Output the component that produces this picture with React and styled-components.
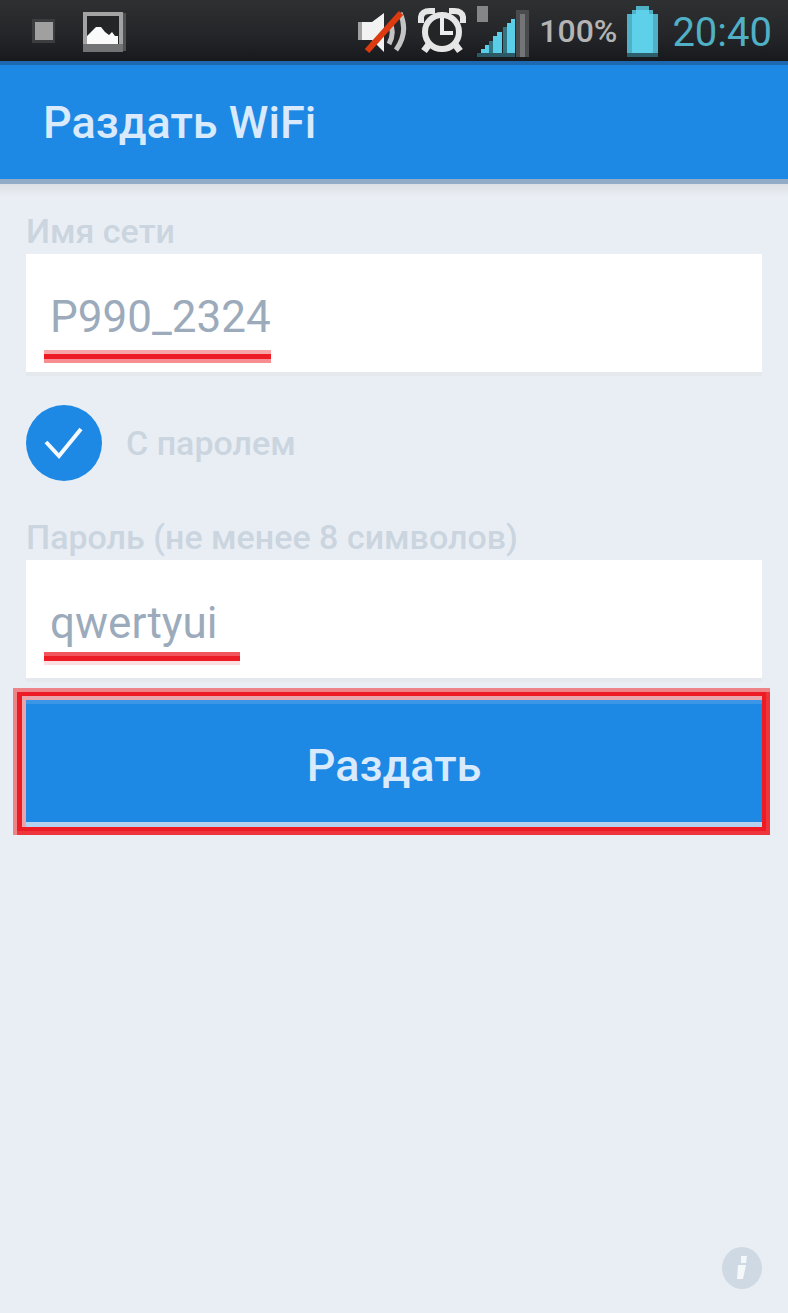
import { useState } from 'react';
import styled, { createGlobalStyle } from 'styled-components';

const GlobalStyle = createGlobalStyle`
  * {
    box-sizing: border-box;
  }

  body {
    margin: 0;
    background: #e9eef4;
    font-family: Roboto, 'Noto Sans', sans-serif;
  }
`;

const Screen = styled.div`
  min-height: 100vh;
  display: flex;
  flex-direction: column;
`;

const StatusBar = styled.div`
  height: 61px;
  padding: 0 16px 0 32px;
  display: flex;
  justify-content: space-between;
  align-items: center;
  background: linear-gradient(#2f3032, #242528 60%, #18191c);
`;

const StatusGroup = styled.div`
  display: flex;
  align-items: center;
  gap: ${({ $gap }) => $gap}px;
`;

const Battery = styled.span`
  font-size: 32px;
  font-weight: 500;
  color: #b4b4b4;
`;

const Clock = styled.span`
  margin-left: 4px;
  padding-top: 4px;
  font-size: 40px;
  color: #4fb0c6;
`;

const AppBar = styled.header`
  height: 123px;
  padding: 0 43px;
  display: flex;
  align-items: center;
  border-top: 4px solid #1d69b1;
  border-bottom: 5px solid #92abc6;
  background: #1e88e5;
`;

const Title = styled.h1`
  margin: 0;
  font-size: 45px;
  font-weight: 500;
  color: #d8eafb;
`;

const Form = styled.form`
  flex: 1;
  display: flex;
  flex-direction: column;
  padding: 24px 26px 22px;
  background: linear-gradient(#dde0e4, #e9eef4 12px);
`;

const Label = styled.label`
  font-size: 34px;
  line-height: 46px;
  font-weight: 500;
  color: #cbd5df;
`;

const Field = styled.div`
  position: relative;
`;

const TextInput = styled.input`
  display: block;
  width: 100%;
  height: 122px;
  padding: 8px 24px 0;
  border: none;
  border-bottom: 4px solid #e5e8ec;
  border-radius: 0;
  background: #fff;
  font-family: inherit;
  font-size: 44px;
  color: #9cabbb;

  &:focus {
    outline: none;
  }
`;

const Underline = styled.span`
  position: absolute;
  left: 18px;
  bottom: ${({ $bottom }) => $bottom}px;
  width: ${({ $width }) => $width}px;
  height: 13px;
  border-top: 4px solid ${({ $top }) => $top};
  border-bottom: 4px solid ${({ $base }) => $base};
  background: #ed1c24;
  pointer-events: none;
`;

const CheckRow = styled.div`
  display: flex;
  align-items: center;
  gap: 24px;
  margin: 28px 0 32px;
`;

const CheckBox = styled.span`
  position: relative;
  width: 76px;
  height: 78px;
  display: flex;
  align-items: center;

  svg {
    position: absolute;
    inset: 0;
    pointer-events: none;
  }
`;

const CheckInput = styled.input`
  appearance: none;
  width: 76px;
  height: 76px;
  margin: 0;
  border-radius: 50%;
  background: #cbd5df;

  &:checked {
    background: #1e88e5;
  }
`;

const SubmitArea = styled.div`
  position: relative;
  margin-top: 18px;
`;

const SubmitButton = styled.button`
  display: block;
  width: 100%;
  height: 127px;
  padding: 4px 0 0;
  border: none;
  border-top: 4px solid #3c96e6;
  border-bottom: 5px solid #b4d2f0;
  background: #1e88e5;
  font-family: inherit;
  font-size: 45px;
  font-weight: 500;
  color: #d8eafb;
`;

const Frame = styled.span`
  position: absolute;
  inset: -8px -4px -4px -9px;
  border: 4px solid #ed1c24;
  border-left-width: 5px;
  box-shadow:
    2px 2px 0 2px #ee353c,
    -2px -2px 0 2px #ec8489,
    0 0 0 4px #ec8489,
    inset 4px 4px 0 rgba(237, 28, 36, 0.35);
  pointer-events: none;
`;

const InfoButton = styled.button`
  align-self: flex-end;
  margin-top: auto;
  width: 42px;
  height: 44px;
  padding: 0;
  border: none;
  background: none;
`;

function PictureIcon() {
  return (
    <svg width="43" height="42" viewBox="0 0 43 42">
      <path d="M38 3h5v38h-5z" fill="#505153" />
      <rect x="2" y="4" width="36" height="35" fill="#242527" stroke="#a3a3a3" strokeWidth="4" />
      <path d="M0 34h40v8H0z" fill="#727374" />
      <path d="M4 34v-8l5-5 4-4h5l4 5 4 3 3-3 3 4h3v8z" fill="#fafafa" />
    </svg>
  );
}

function MuteIcon() {
  return (
    <svg width="50" height="44" viewBox="0 0 50 44">
      <path d="M0 13h5v18H0z" fill="#a0a0a0" />
      <path d="M4 13h10L26 4v39L14 31H4z" fill="#f2f2f2" />
      <path d="M32 14q5 10-1 21M42 4q9 19-4 37" fill="none" stroke="#c4c4c4" strokeWidth="5" />
      <path d="M9 42L43 4" stroke="#dd3a10" strokeWidth="6" />
    </svg>
  );
}

function AlarmIcon() {
  return (
    <svg width="48" height="46" viewBox="0 0 48 46">
      <path d="M3 15V9q1-6 9-6h5M31 3h5q8 0 9 6v6" fill="none" stroke="#e6e6e6" strokeWidth="6" />
      <path d="M12 35l-6 8M36 35l6 8" stroke="#e6e6e6" strokeWidth="7" />
      <circle cx="24" cy="24" r="17" fill="#242527" stroke="#e6e6e6" strokeWidth="6" />
      <path d="M24 10v15h11" fill="none" stroke="#ededed" strokeWidth="4" />
    </svg>
  );
}

function SignalIcon() {
  return (
    <svg width="53" height="52" viewBox="0 0 53 52">
      <path d="M1 1h11v16H1z" fill="#858687" />
      <path d="M5 48v-4h4v-4h8v8zM17 48V31h4v-4h5v21zM31 48V18h4v-4h4v34z" fill="#5acde8" />
      <path d="M13 48V36h4v12zM27 48V22h4v26z" fill="#327482" />
      <path d="M40 52V5h13v47z" fill="#4a4b4d" />
      <path d="M44 52V9h5v43z" fill="#747576" />
      <path d="M1 48h38v4H1z" fill="#2b5965" />
    </svg>
  );
}

function BatteryIcon() {
  return (
    <svg width="31" height="52" viewBox="0 0 31 52">
      <path d="M0 9h5V5h4V1h13v4h4v4h5v39H0z" fill="#4fb0c6" />
      <path d="M5 9h4V5h13v4h4v39H5z" fill="#5fd0ea" />
      <path d="M0 48h31v4H0z" fill="#2d5e6b" />
    </svg>
  );
}

function App() {
  const [name, setName] = useState('P990_2324');
  const [password, setPassword] = useState('qwertyui');
  const [secured, setSecured] = useState(true);

  return (
    <Screen>
      <GlobalStyle />
      <StatusBar>
        <StatusGroup $gap={28}>
          <svg width="23" height="24" viewBox="0 0 23 24">
            <rect width="23" height="24" fill="#3c3d3f" />
            <rect x="3" y="3" width="18" height="18" fill="#a0a0a0" />
          </svg>
          <PictureIcon />
        </StatusGroup>
        <StatusGroup $gap={10}>
          <MuteIcon />
          <AlarmIcon />
          <SignalIcon />
          <Battery>100%</Battery>
          <BatteryIcon />
          <Clock>20:40</Clock>
        </StatusGroup>
      </StatusBar>
      <AppBar>
        <Title>Раздать WiFi</Title>
      </AppBar>
      <Form onSubmit={(e) => e.preventDefault()}>
        <Label htmlFor="name">Имя сети</Label>
        <Field>
          <TextInput
            id="name"
            type="text"
            value={name}
            onChange={(e) => setName(e.target.value)}
          />
          <Underline $width={227} $bottom={13} $top="#f8a5a8" $base="#f68d90" />
        </Field>
        <CheckRow>
          <CheckBox>
            <CheckInput
              id="secured"
              type="checkbox"
              checked={secured}
              onChange={(e) => setSecured(e.target.checked)}
            />
            {secured && (
              <svg viewBox="0 0 76 78">
                <path d="M20 38l13 14 22-27" fill="none" stroke="#f4f9fe" strokeWidth="4" />
              </svg>
            )}
          </CheckBox>
          <Label htmlFor="secured">С паролем</Label>
        </CheckRow>
        <Label htmlFor="password">Пароль (не менее 8 символов)</Label>
        <Field>
          <TextInput
            id="password"
            type="text"
            value={password}
            onChange={(e) => setPassword(e.target.value)}
          />
          <Underline $width={196} $bottom={17} $top="#f0565c" $base="#fce0e1" />
        </Field>
        <SubmitArea>
          <SubmitButton type="submit">Раздать</SubmitButton>
          <Frame />
        </SubmitArea>
        <InfoButton type="button" aria-label="Информация">
          <svg width="42" height="44" viewBox="0 0 42 44">
            <ellipse cx="22" cy="21" rx="20" ry="21" fill="#cfd9e3" />
            <path d="M21 9h6l-1 7h-5zM18 18h8l-3 14h-6z" fill="#f5f8fa" />
          </svg>
        </InfoButton>
      </Form>
    </Screen>
  );
}

export default App;
